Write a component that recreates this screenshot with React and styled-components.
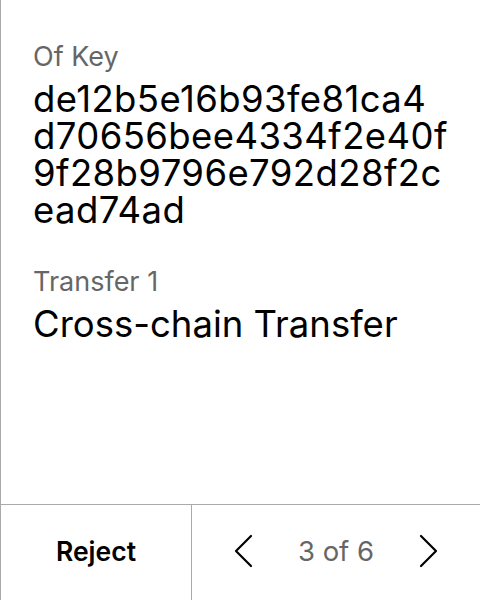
import React from "react";
import styled, { createGlobalStyle } from "styled-components";

const GlobalStyle = createGlobalStyle`
  html, body {
    margin: 0;
    padding: 0;
    background: #fff;
  }
  body {
    font-family: Inter, "Noto Sans", sans-serif;
    color: #000;
  }
`;

const Screen = styled.div`
  display: flex;
  flex-direction: column;
  height: 600px;
  width: 480px;
  box-sizing: border-box;
  border-left: 1px solid #aaa;
`;

const Body = styled.div`
  flex: 1;
  display: flex;
  flex-direction: column;
  gap: 37px;
  padding: 41px 20px 0 32px;
`;

const Field = styled.div`
  display: flex;
  flex-direction: column;
  gap: 8px;
`;

const Label = styled.div`
  font-size: 27px;
  line-height: 32px;
  color: #666;
`;

const Value = styled.div`
  font-size: 36.5px;
  line-height: 37px;
  color: #000;
  letter-spacing: ${(p) => (p.$mono ? "0.4px" : "0")};
`;

const KeyLine = styled.span`
  display: block;
  white-space: nowrap;
`;

const Footer = styled.div`
  display: grid;
  grid-template-columns: 191px 1fr;
  height: 96px;
  border-top: 1px solid #aaa;
  box-sizing: border-box;
`;

const RejectButton = styled.button`
  border: none;
  border-right: 1px solid #aaa;
  background: none;
  font-family: inherit;
  font-size: 26.5px;
  font-weight: 600;
  color: #000;
  padding: 0 0 4px;
  cursor: pointer;
`;

const Pager = styled.div`
  display: flex;
  align-items: center;
  justify-content: center;
  gap: 45px;
  padding-bottom: 4px;
`;

const NavButton = styled.button`
  display: flex;
  align-items: center;
  justify-content: center;
  border: none;
  background: none;
  padding: 0;
  width: 20px;
  height: 40px;
  cursor: pointer;
`;

const Count = styled.span`
  font-size: 27.5px;
  color: #666;
`;

const Chevron = ({ dir }) => (
  <svg width="20" height="34" viewBox="0 0 20 34" fill="none">
    <path
      d={dir === "left" ? "M18 2 L3 17 L18 32" : "M2 2 L17 17 L2 32"}
      stroke="#000"
      strokeWidth="2.2"
      strokeLinecap="round"
      strokeLinejoin="round"
    />
  </svg>
);

const KEY = "de12b5e16b93fe81ca4d70656bee4334f2e40f9f28b9796e792d28f2cead74ad";

const chunk = (str, size) => {
  const out = [];
  for (let i = 0; i < str.length; i += size) out.push(str.slice(i, i + size));
  return out;
};

export default function App() {
  return (
    <>
      <GlobalStyle />
      <Screen>
        <Body>
          <Field>
            <Label>Of Key</Label>
            <Value $mono>
              {chunk(KEY, 19).map((line) => (
                <KeyLine key={line}>{line}</KeyLine>
              ))}
            </Value>
          </Field>
          <Field>
            <Label>Transfer 1</Label>
            <Value>Cross-chain Transfer</Value>
          </Field>
        </Body>
        <Footer>
          <RejectButton>Reject</RejectButton>
          <Pager>
            <NavButton aria-label="Previous">
              <Chevron dir="left" />
            </NavButton>
            <Count>3 of 6</Count>
            <NavButton aria-label="Next">
              <Chevron dir="right" />
            </NavButton>
          </Pager>
        </Footer>
      </Screen>
    </>
  );
}
